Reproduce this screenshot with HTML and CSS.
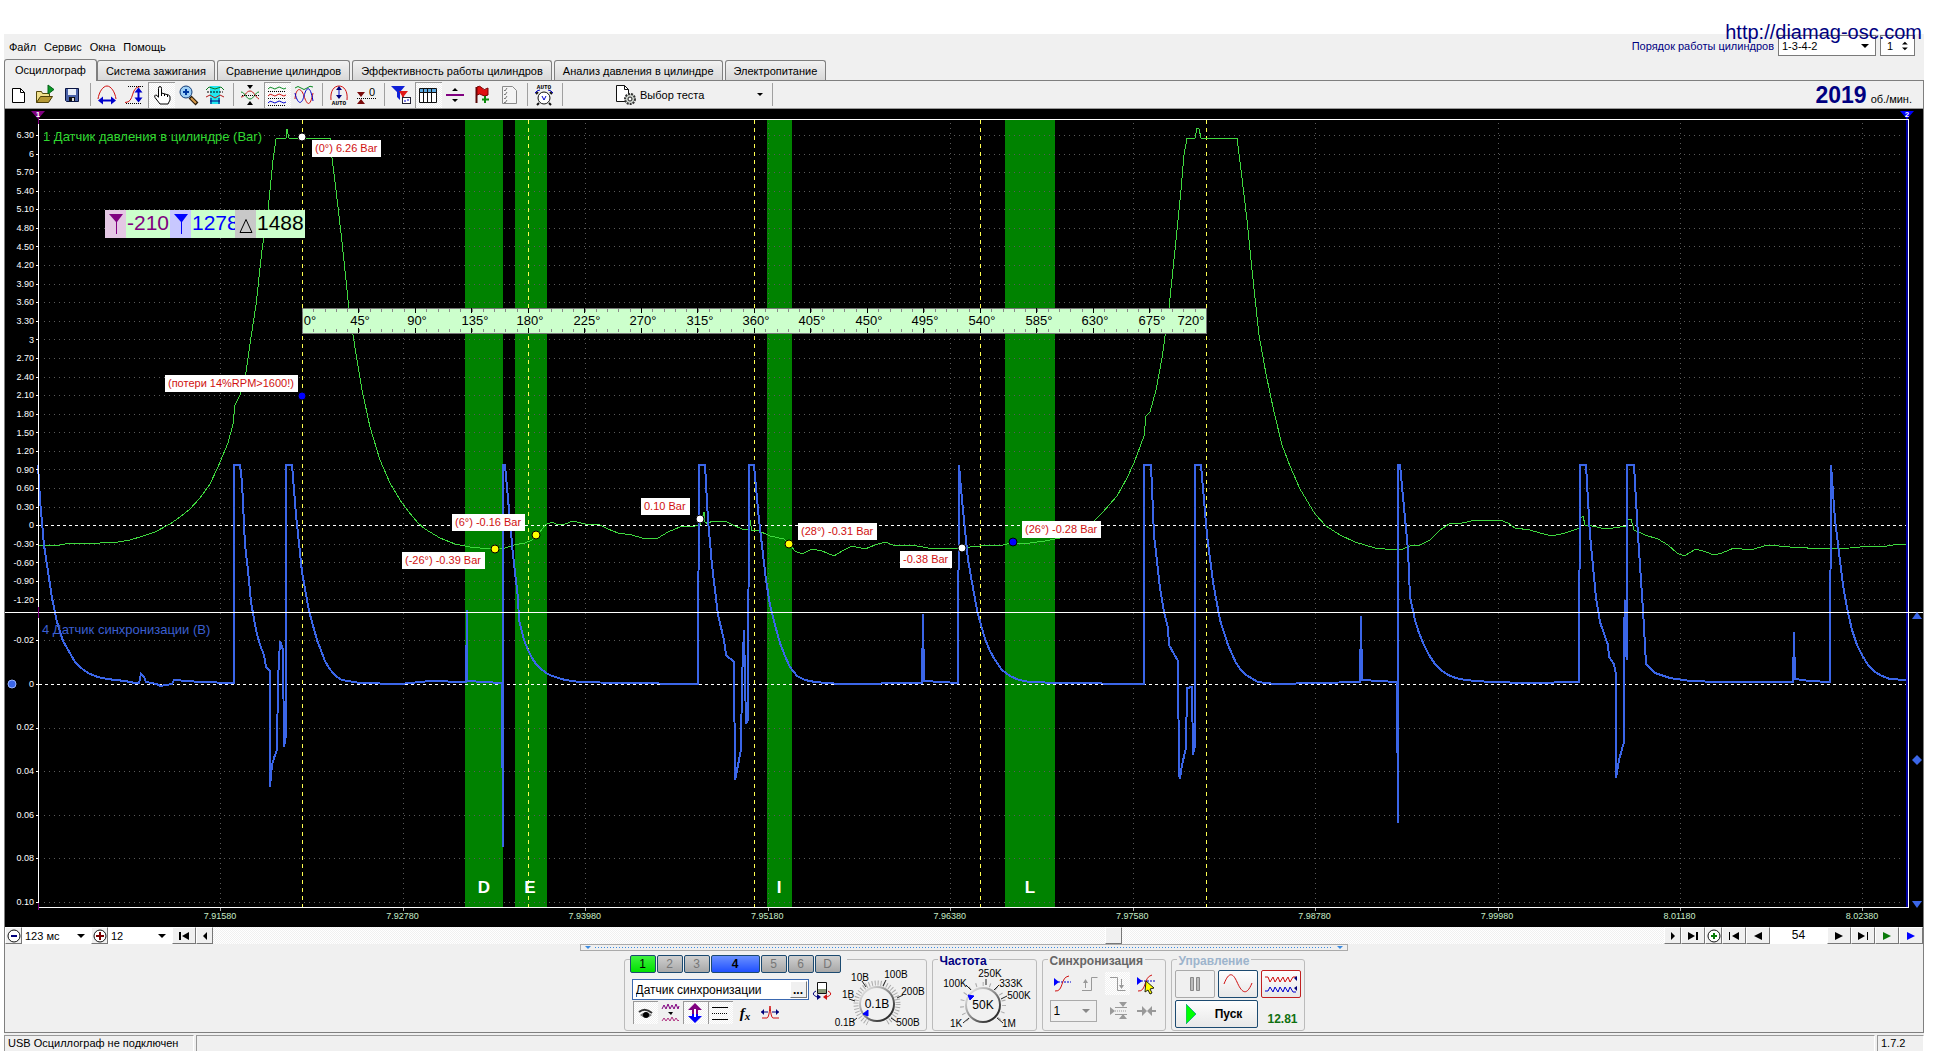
FILE: index.html
```html
<!DOCTYPE html>
<html lang="ru">
<head>
<meta charset="utf-8">
<title>Осциллограф</title>
<link rel="stylesheet" href="styles.css">
</head>
<body>
<div class="app">
  <a class="site-link" href="http://diamag-osc.com">http://diamag-osc.com</a>

  <header class="menubar">
    <nav class="menu">
      <button type="button">Файл</button>
      <button type="button">Сервис</button>
      <button type="button">Окна</button>
      <button type="button">Помощь</button>
    </nav>
    <div class="order">
      <label for="order">Порядок работы цилиндров</label>
      <span class="drop drop-order"><select id="order"><option>1-3-4-2</option></select><i class="arrow"></i></span>
      <span class="spin"><input id="cyl" type="text" value="1" aria-label="Цилиндр"><svg width="8" height="14" viewBox="0 0 8 14"><path d="M0 5l4-4 4 4zM0 9h8l-4 4z"/></svg></span>
    </div>
  </header>

  <nav class="tabs">
    <button type="button" class="tab tab-on">Осциллограф</button>
    <button type="button" class="tab">Система зажигания</button>
    <button type="button" class="tab">Сравнение цилиндров</button>
    <button type="button" class="tab">Эффективность работы цилиндров</button>
    <button type="button" class="tab">Анализ давления в цилиндре</button>
    <button type="button" class="tab">Электропитание</button>
  </nav>

  <main class="page">
    <div class="toolbar">
      <button type="button" class="tool" aria-label="Новый"><svg viewBox="0 0 22 22"><path d="M5.500 4.500h8l4 4v10h-12z" fill="#fff" stroke="#000"/><path d="M13.500 4.500v4h4" fill="none" stroke="#000"/></svg></button>
      <button type="button" class="tool" aria-label="Открыть"><svg viewBox="0 0 22 22"><path d="M2.500 18.500v-11h5l1 2h7v3" fill="#f0e08c" stroke="#55490c"/><path d="M2.500 18.500l4-6h12l-4 6z" fill="#b79a35" stroke="#4b3f08"/><path d="M14 1v9l6-4.500z" fill="#0a9a28" stroke="#056017"/></svg></button>
      <button type="button" class="tool" aria-label="Сохранить"><svg viewBox="0 0 22 22"><path d="M4.500 4.500h13v13h-12l-1-1z" fill="#4a62a8" stroke="#0a1440"/><path d="M7 5h8v6H7z" fill="#e8eef8"/><path d="M8 13h6v4H8z" fill="#111"/><path d="M11 14h2v3h-2z" fill="#ddd"/></svg></button>
      <i class="sep"></i>
      <button type="button" class="tool" aria-label="Время"><svg viewBox="0 0 22 22"><path d="M2 15c1-7 5-13 9-13s8 6 9 13" fill="none" stroke="#d01010"/><path d="M5 16.500h12" stroke="#00c" stroke-width="2"/><path d="M7 12.500v8l-5-4zM15 12.500v8l5-4z" fill="#00c"/></svg></button>
      <button type="button" class="tool" aria-label="Амплитуда"><svg viewBox="0 0 22 22"><path d="M2 18.500c10 0 5-15 15-16" fill="none" stroke="#d01010"/><path d="M5 2.500h15M3 19.500h16" stroke="#000" stroke-dasharray="1 1"/><path d="M15.500 5v12" stroke="#00c" stroke-width="2"/><path d="M11.500 8.500h8l-4-5zM11.500 13.500h8l-4 5z" fill="#00c"/></svg></button>
      <button type="button" class="tool pressed" aria-label="Рука"><svg viewBox="0 0 22 22"><path d="M8.500 13V4.500q0-2 1.500-2t1.500 2V9l7 2q1.500.5 1.500 2v3l-2 4h-8L5 13.500q-1-2 .5-2.500t3 2.500" fill="#fff" stroke="#000"/><path d="M11.500 9v3M14.500 10v2M17.500 11v2" stroke="#000"/></svg></button>
      <button type="button" class="tool" aria-label="Лупа"><svg viewBox="0 0 22 22"><path d="M13 13l7 7" stroke="#2b1c08" stroke-width="4"/><path d="M14 14l5 5" stroke="#d89a4a" stroke-width="2"/><circle cx="9" cy="8" r="6" fill="#9fd0f5" stroke="#123c78" stroke-width="1"/><path d="M9 5v6M6 8h6" stroke="#003aa0" stroke-width="2"/></svg></button>
      <button type="button" class="tool" aria-label="Область"><svg viewBox="0 0 22 22"><path d="M6 2h10v18H6z" fill="#22e6f0"/><path d="M2 6l3-3 6 2 6-2 3 3" fill="none" stroke="#0a7a20" stroke-width="1"/><path d="M3 8h16" stroke="#000" stroke-dasharray="2 1"/><path d="M2 13l4-2 5 3 5-3 4 2" fill="none" stroke="#b01818"/><path d="M6 17h10M7 14v6M15 14v6" stroke="#00007a"/></svg></button>
      <i class="sep"></i>
      <button type="button" class="tool" aria-label="Совместить"><svg viewBox="0 0 22 22"><path d="M2 13c4 0 5-6 9-6s5 6 9 8" fill="none" stroke="#c01818"/><path d="M2 8c4 0 5 7 9 7s5-7 9-7" fill="none" stroke="#0a8a20"/><path d="M3 11.500h17" stroke="#000" stroke-dasharray="1 1"/><path d="M8 1h6l-3 4zM8 21h6l-3-4z"/></svg></button>
      <button type="button" class="tool pressed" aria-label="Разнести"><svg viewBox="0 0 22 22" fill="none"><path d="M2 5q2-3 4.500-1t4.500 0 4.500 0T20 4" stroke="#0a8a20" stroke-width="1"/><path d="M2 7.500h18M2 14.500h18M2 21.500h18" stroke="#000" stroke-dasharray="1 1"/><path d="M2 12q2-3 4.500-1t4.500 0 4.500 0T20 11" stroke="#d01010"/><path d="M2 19q2-3 4.500-1t4.500 0 4.500 0T20 18" stroke="#00c"/></svg></button>
      <button type="button" class="tool" aria-label="Наложить"><svg viewBox="0 0 22 22" fill="none"><path d="M2 4q3-3 6 0t6 0 6-1" stroke="#0a8a20"/><path d="M2 15c1-12 6-12 9-3s6 12 9-3" stroke="#d01010"/><path d="M2 9c3 13 7 11 9 3s6-13 9 5" stroke="#00c"/></svg></button>
      <i class="sep"></i>
      <button type="button" class="tool" aria-label="Авто"><svg viewBox="0 0 22 22"><path d="M3 16C2 7 6 2 11 2s9 5 8 14" fill="none" stroke="#d01010"/><path d="M11 4v10" stroke="#00c"/><path d="M8 6h6l-3-4zM8 11h6l-3 4z" fill="#00007a"/><text x="11" y="21" class="ico-auto">AUTO</text></svg></button>
      <button type="button" class="tool" aria-label="Ноль"><svg viewBox="0 0 22 22"><path d="M2 8h8l-4 5zM2 20h8l-4-5z" fill="#7a0a0a"/><path d="M2 14.500h19" stroke="#000" stroke-dasharray="1 1"/><text x="17" y="12" class="ico-zero">0</text></svg></button>
      <i class="sep"></i>
      <button type="button" class="tool" aria-label="Фильтр"><svg viewBox="0 0 22 22"><path d="M1 2h14l-5 6v8l-3-3V8z" fill="#1020d8"/><path d="M9 7h9l-4 5v6l-2-2v-4z" fill="#e01818"/><rect x="12.500" y="13.500" width="8" height="6" fill="#fff" stroke="#223"/><path d="M14 17h2M17 16h2" stroke="#00c"/></svg></button>
      <button type="button" class="tool pressed" aria-label="Таблица"><svg viewBox="0 0 22 22"><path d="M2.500 4.500h17v14h-17z" fill="#fff" stroke="#111"/><path d="M3 5h16v3H3z" fill="#5aa8e0"/><path d="M2 8.500h18M6.500 5v13M10.500 5v13M14.500 5v13" stroke="#111"/></svg></button>
      <button type="button" class="tool" aria-label="Разделить"><svg viewBox="0 0 22 22"><path d="M2 11h18" stroke="#800080" stroke-width="2"/><path d="M8 7h6l-3-3zM8 15h6l-3 3z"/></svg></button>
      <button type="button" class="tool" aria-label="Метка"><svg viewBox="0 0 22 22"><path d="M5.500 3v16" stroke="#5a0808" stroke-width="2"/><path d="M6 3q3-2 5 1t6 0v7q-4 2-6 0t-5 0z" fill="#e01010" stroke="#700"/><path d="M14 12v7M11 15.500h7" stroke="#0a8a0a" stroke-width="2"/></svg></button>
      <button type="button" class="tool" aria-label="Список"><svg viewBox="0 0 22 22"><path d="M4.500 2.500h10l4 4v13h-14z" fill="#f4f4f4" stroke="#8a8a8a"/><path d="M6 6l1 1 2-3M6 10l1 1 2-3M6 14l1 1 2-3M6 18l1 1 2-3" fill="none" stroke="#777"/></svg></button>
      <i class="sep"></i>
      <button type="button" class="tool" aria-label="Автоизмерение"><svg viewBox="0 0 22 22"><text x="11" y="5" class="ico-auto">AUTO</text><circle cx="11" cy="14" r="6" fill="#fff" stroke="#111" stroke-width="1"/><path d="M5 8L3 10M17 8l2 2M6 19l-2 2M16 19l2 2" stroke="#111" stroke-width="2"/><path d="M2 9q2-3 5-3M20 9q-2-3-5-3" fill="none" stroke="#00c"/><path d="M9 12l2 4 2-4" fill="none" stroke="#00c" stroke-width="1"/></svg></button>
      <i class="sep"></i>
      <button type="button" class="test-pick">
        <svg width="22" height="22" viewBox="0 0 22 22"><path d="M1.500 1.500h8l4 4v12h-12z" fill="#fff" stroke="#111"/><path d="M9.500 1.500v4h4" fill="none" stroke="#111"/><circle cx="15" cy="15" r="5" fill="#cdd3cd" stroke="#333" stroke-width="2" stroke-dasharray="2 1"/><circle cx="15" cy="15" r="2" fill="#fff" stroke="#222"/></svg>
        <span>Выбор теста</span><i class="arrow"></i>
      </button>
      <i class="sep"></i>
      <output class="rpm"><b>2019</b><span>об./мин.</span></output>
    </div>

    <section class="scope">
      <svg class="plot" viewBox="5 109 1918 818" preserveAspectRatio="none">
        <g fill="#008200"><path d="M465 120h38v787h-38zM515 120h32v787h-32zM767 120h25v787h-25zM1005 120h50v787h-50z"/></g>
        <g fill="none" stroke="#5a5a5a" shape-rendering="crispEdges" stroke-dasharray="1 4">
          <path d="M44 135.500H1904M44 154.500H1904M44 172.500H1904M44 191.500H1904M44 209.500H1904M44 228.500H1904M44 246.500H1904M44 265.500H1904M44 284.500H1904M44 302.500H1904M44 321.500H1904M44 339.500H1904M44 358.500H1904M44 377.500H1904M44 395.500H1904M44 414.500H1904M44 432.500H1904M44 451.500H1904M44 469.500H1904M44 488.500H1904M44 507.500H1904M44 544.500H1904M44 562.500H1904M44 581.500H1904M44 599.500H1904M44 640.500H1904M44 728.500H1904M44 771.500H1904M44 815.500H1904M44 858.500H1904M44 902.500H1904"/>
          <path d="M220.500 123V905M403.500 123V905M585.500 123V905M768.500 123V905M950.500 123V905M1133.500 123V905M1315.500 123V905M1498.500 123V905M1680.500 123V905M1862.500 123V905"/>
        </g>
        <g fill="none" shape-rendering="crispEdges">
          <path d="M39 525.500H1906M39 684.500H1906" stroke="#fff" stroke-dasharray="3 3"/>
          <path d="M302.500 120V907M528.500 120V907M754.500 120V907M980.500 120V907M1206.500 120V907" stroke="#ffff50" stroke-dasharray="4 4"/>
          <path d="M1906.500 113V907" stroke="#0000a0" stroke-width="2"/>
          <path class="trace-green" d="M39 545L60 545 65 544 80 543 100 543 118 542 130 540 143 536 155 532 170 524 180 517 190 509 200 498 210 484 218 467 228 443 233 424 235 405 237 401 240 395 246 372 250 344 256 305 262 250 268 210 273 160 276 139 279 138 286 138 287 129 289 138 330 138 332 158 336 190 342 242 349 309 356 354 362 390 370 427 380 460 390 483 400 500 408 511 418 523 425 529 440 538 455 544 470 547 490 549 505 548 514 545 525 543 532 540 540 532 545 525 552 522 558 525 565 524 573 521 585 524 600 525 608 529 618 533 632 535 642 538 650 539 658 538 668 532 680 527 695 526 700 525 702 519 704 512 705 522 708 524 712 521 725 521 733 525 742 529 749 530 750 520 752 531 757 530 770 536 784 539 789 544 795 551 802 554 812 549 822 551 834 556 842 551 852 546 865 549 875 545 885 542 893 545 912 545 928 548 960 548 980 546 990 545 1000 546 1010 543 1030 543 1045 541 1060 538 1075 533 1089 526 1102 513 1117 496 1127 478 1134 463 1144 436 1146 416 1150 412 1156 390 1162 358 1169 308 1176 240 1181 190 1184 155 1187 138 1195 138 1197 128 1199 129 1201 138 1237 138 1241 170 1247 220 1252 270 1259 335 1266 374 1274 412 1282 445 1290 466 1300 489 1315 514 1326 526 1340 535 1355 542 1375 548 1395 550 1403 549 1412 545 1420 545 1430 540 1440 530 1449 524 1462 523 1476 520 1500 520 1508 523 1515 528 1530 530 1540 533 1552 536 1565 533 1580 528 1581 518 1583 516 1585 525 1592 526 1606 529 1627 526 1628 519 1631 519 1634 530 1645 535 1658 539 1668 545 1677 553 1684 556 1696 549 1706 552 1714 555 1722 553 1734 548 1750 550 1768 545 1790 547 1800 547 1815 549 1850 548 1870 546 1887 546 1900 544 1906 545"/>
          <path class="trace-blue" d="M38 465L40 500 44 545 52 598 57 622 63 641 71 655 75 662 80 667 85 671 90 674 98 677 107 679 125 681 135 683 139 683 141 674 144 677 146 682 157 684 160 686 172 684 174 680 200 682 234 683 234 465 240 465 242 482 245 545 248 570 251 602 256 630 260 645 264 655 266 667 270 671 270 787 272 765 275 755 277 750 278 680 280 641 283 650 284 747 286 735 286 465 292 465 296 515 302 572 309 611 317 640 325 661 329 668 333 673 337 677 342 680 360 683 400 684 430 681 466 682 467 610 467 681 502 683 503 847 503 465 505 465 509 510 513 555 518 598 519 620 524 640 528 650 532 658 536 664 540 668 546 673 552 676 565 680 580 682 620 683 698 684 699 465 705 465 708 520 712 565 718 615 724 640 726 655 734 662 735 780 738 765 741 750 742 680 744 630 746 724 748 720 749 465 754 465 759 520 766 580 770 605 775 625 780 643 785 656 790 667 797 676 805 680 815 682 840 684 922 683 923 614 924 681 958 683 959 465 962 500 968 560 977 610 981 625 985 639 990 651 995 660 1002 670 1010 676 1019 680 1030 682 1060 683 1144 684 1144 465 1151 465 1154 535 1160 588 1164 612 1168 628 1169 645 1178 661 1179 775 1180 779 1182 765 1186 748 1187 688 1192 687 1193 755 1195 745 1195 465 1201 465 1207 535 1213 582 1220 620 1228 645 1236 663 1241 670 1246 675 1258 682 1275 684 1360 682 1361 616 1362 680 1397 682 1398 823 1398 465 1400 465 1408 550 1410 597 1415 620 1419 633 1424 645 1429 655 1435 664 1441 670 1448 675 1456 678 1465 680 1490 682 1530 683 1579 682 1580 465 1586 465 1590 535 1596 598 1600 622 1608 645 1609 657 1614 664 1616 675 1616 778 1619 760 1624 742 1624 635 1625 600 1625 648 1627 660 1627 465 1634 465 1638 535 1643 610 1646 664 1655 673 1670 678 1690 681 1720 682 1793 682 1794 632 1795 679 1810 681 1830 682 1831 465 1835 520 1843 585 1847 608 1852 630 1857 645 1862 655 1868 665 1875 672 1882 676 1890 679 1906 680"/>
          <path d="M38.500 119V908M38 119.500H1909M1908.500 119V908M38 907.500H1909M5 612.500H1923" stroke="#fff"/>
          <path d="M36 135.500h3M36 154.500h3M36 172.500h3M36 191.500h3M36 209.500h3M36 228.500h3M36 246.500h3M36 265.500h3M36 284.500h3M36 302.500h3M36 321.500h3M36 339.500h3M36 358.500h3M36 377.500h3M36 395.500h3M36 414.500h3M36 432.500h3M36 451.500h3M36 469.500h3M36 488.500h3M36 507.500h3M36 525.500h3M36 544.500h3M36 562.500h3M36 581.500h3M36 599.500h3M36 640.500h3M36 684.500h3M36 728.500h3M36 771.500h3M36 815.500h3M36 858.500h3M36 902.500h3" stroke="#fff"/>
          <path d="M220.500 908v3M403.500 908v3M585.500 908v3M768.500 908v3M950.500 908v3M1133.500 908v3M1315.500 908v3M1498.500 908v3M1680.500 908v3M1862.500 908v3" stroke="#aaa"/>
          <path d="M38.500 113V124M38.500 607V618M38.500 903V910" stroke="#800080"/>
          <rect x="302" y="308" width="904" height="25" fill="#ccffcc" stroke="#777"/>
          <path d="M302 310.500H1205M302 330.500H1205" stroke="#888" stroke-width="3" stroke-dasharray="1 10.300"/>
          <path d="M358 310.500H1205M358 330.500H1205" stroke="#000" stroke-width="5" stroke-dasharray="1 55.500"/>
        </g>
      </svg>

      <div class="axis axis-y pin" style="--x:5;--y:130;--h:475">
        <span>6.30</span><span>6</span><span>5.70</span><span>5.40</span><span>5.10</span><span>4.80</span><span>4.50</span><span>4.20</span><span>3.90</span><span>3.60</span><span>3.30</span><span>3</span><span>2.70</span><span>2.40</span><span>2.10</span><span>1.80</span><span>1.50</span><span>1.20</span><span>0.90</span><span>0.60</span><span>0.30</span><span>0</span><span>-0.30</span><span>-0.60</span><span>-0.90</span><span>-1.20</span>
      </div>
      <div class="axis axis-y pin" style="--x:5;--y:635;--h:272">
        <span>-0.02</span><span>0</span><span>0.02</span><span>0.04</span><span>0.06</span><span>0.08</span><span>0.10</span>
      </div>
      <div class="axis axis-x pin" style="--x:195;--y:911;--w:1692">
        <span>7.91580</span><span>7.92780</span><span>7.93980</span><span>7.95180</span><span>7.96380</span><span>7.97580</span><span>7.98780</span><span>7.99980</span><span>8.01180</span><span>8.02380</span>
      </div>

      <span class="pin title title-green" style="--x:43;--y:128">1 Датчик давления в цилиндре (Bar)</span>
      <span class="pin title title-blue" style="--x:42;--y:621">4 Датчик синхронизации (В)</span>

      <div class="pin cursors" style="--x:105;--y:210">
        <i class="cur cur-a"><svg width="14" height="20" viewBox="0 0 14 20"><path d="M0 0h14L8 8v12H7V8z" fill="#800080"/></svg></i><span class="val val-a">-210</span>
        <i class="cur cur-b"><svg width="14" height="20" viewBox="0 0 14 20"><path d="M0 0h14L8 8v12H7V8z" fill="#00f"/></svg></i><span class="val val-b">1278</span>
        <i class="cur cur-d"><svg width="14" height="20" viewBox="0 0 14 20"><path d="M7 5.500L13 18.500H1z" fill="none" stroke="#000"/></svg></i><span class="val val-d">1488</span>
      </div>

      <div class="angles">
        <span class="pin mid" style="--x:310;--y:321">0°</span><span class="pin mid" style="--x:360;--y:321">45°</span><span class="pin mid" style="--x:417;--y:321">90°</span><span class="pin mid" style="--x:475;--y:321">135°</span><span class="pin mid" style="--x:530;--y:321">180°</span><span class="pin mid" style="--x:587;--y:321">225°</span><span class="pin mid" style="--x:643;--y:321">270°</span><span class="pin mid" style="--x:700;--y:321">315°</span><span class="pin mid" style="--x:756;--y:321">360°</span><span class="pin mid" style="--x:812;--y:321">405°</span><span class="pin mid" style="--x:869;--y:321">450°</span><span class="pin mid" style="--x:925;--y:321">495°</span><span class="pin mid" style="--x:982;--y:321">540°</span><span class="pin mid" style="--x:1039;--y:321">585°</span><span class="pin mid" style="--x:1095;--y:321">630°</span><span class="pin mid" style="--x:1152;--y:321">675°</span><span class="pin mid" style="--x:1191;--y:321">720°</span>
      </div>

      <b class="pin mid zone" style="--x:484;--y:888">D</b>
      <b class="pin mid zone" style="--x:530;--y:888">E</b>
      <b class="pin mid zone" style="--x:779;--y:888">I</b>
      <b class="pin mid zone" style="--x:1030;--y:888">L</b>

      <span class="pin note" style="--x:312;--y:140">(0°) 6.26 Bar</span>
      <span class="pin note" style="--x:165;--y:375">(потери 14%RPM&gt;1600!)</span>
      <span class="pin note" style="--x:452;--y:514">(6°) -0.16 Bar</span>
      <span class="pin note" style="--x:402;--y:552">(-26°) -0.39 Bar</span>
      <span class="pin note" style="--x:641;--y:498">0.10 Bar</span>
      <span class="pin note" style="--x:798;--y:523">(28°) -0.31 Bar</span>
      <span class="pin note" style="--x:900;--y:551">-0.38 Bar</span>
      <span class="pin note" style="--x:1022;--y:521">(26°) -0.28 Bar</span>

      <i class="pin mid dot dot-white" style="--x:302;--y:137"></i>
      <i class="pin mid dot dot-blue" style="--x:302;--y:396"></i>
      <i class="pin mid dot dot-yellow" style="--x:495;--y:549"></i>
      <i class="pin mid dot dot-yellow" style="--x:536;--y:535"></i>
      <i class="pin mid dot dot-white" style="--x:700;--y:519"></i>
      <i class="pin mid dot dot-yellow" style="--x:789;--y:544"></i>
      <i class="pin mid dot dot-white" style="--x:962;--y:548"></i>
      <i class="pin mid dot dot-blue" style="--x:1013;--y:542"></i>
      <i class="pin mid dot dot-level" style="--x:12;--y:684"></i>

      <span class="pin mid flag flag-1" style="--x:38;--y:115">1</span>
      <span class="pin mid flag flag-2" style="--x:1907;--y:115">2</span>
      <svg class="pin mid" style="--x:1917;--y:616" width="10" height="8" viewBox="0 0 10 8"><path d="M0 7h10L5 0z" fill="#3b66e8"/></svg>
      <svg class="pin mid" style="--x:1917;--y:760" width="10" height="10" viewBox="0 0 10 10"><path d="M5 0l5 5-5 5-5-5z" fill="#3b66e8"/></svg>
      <svg class="pin mid" style="--x:1917;--y:905" width="10" height="8" viewBox="0 0 10 8"><path d="M0 0h10L5 7z" fill="#3b66e8"/></svg>
    </section>

    <div class="timeline">
      <button type="button" class="nav nav-s" aria-label="Меньше"><svg width="14" height="14" viewBox="0 0 14 14"><circle cx="7" cy="7" r="6" fill="#fff" stroke="#111"/><path d="M4 7h6" stroke="#00007a" stroke-width="2"/></svg></button>
      <span class="drop drop-ms"><select aria-label="Развёртка"><option>123 мс</option></select><i class="arrow"></i></span>
      <button type="button" class="nav nav-s" aria-label="Больше"><svg width="14" height="14" viewBox="0 0 14 14"><circle cx="7" cy="7" r="6" fill="#fff" stroke="#111"/><path d="M3 7h8M7 3v8" stroke="#7a0000" stroke-width="2"/></svg></button>
      <span class="drop drop-zoom"><select aria-label="Масштаб"><option>12</option></select><i class="arrow"></i></span>
      <button type="button" class="nav" aria-label="В начало"><svg width="10" height="8" viewBox="0 0 10 8"><path d="M0 0h2v8H0zM10 0v8L3 4z"/></svg></button>
      <button type="button" class="nav nav-s" aria-label="Назад"><svg width="4" height="8" viewBox="0 0 4 8"><path d="M4 0v8L0 4z"/></svg></button>
      <div class="track"><i class="thumb"></i></div>
      <button type="button" class="nav nav-s" aria-label="Вперёд"><svg width="4" height="8" viewBox="0 0 4 8"><path d="M0 0v8l4-4z"/></svg></button>
      <button type="button" class="nav" aria-label="В конец"><svg width="10" height="8" viewBox="0 0 10 8"><path d="M8 0h2v8H8zM0 0v8l7-4z"/></svg></button>
      <button type="button" class="nav nav-s" aria-label="Добавить"><svg width="14" height="14" viewBox="0 0 14 14"><circle cx="7" cy="7" r="6" fill="#fff" stroke="#111"/><path d="M4 7h6M7 4v6" stroke="#0a7a0a" stroke-width="2"/></svg></button>
      <button type="button" class="nav" aria-label="Первый кадр"><svg width="10" height="8" viewBox="0 0 10 8"><path d="M0 0h1v8H0zM10 0v8L3 4z"/></svg></button>
      <button type="button" class="nav" aria-label="Предыдущий кадр"><svg width="8" height="8" viewBox="0 0 8 8"><path d="M8 0v8L0 4z"/></svg></button>
      <output class="frame">54</output>
      <button type="button" class="nav" aria-label="Следующий кадр"><svg width="8" height="8" viewBox="0 0 8 8"><path d="M0 0v8l8-4z"/></svg></button>
      <button type="button" class="nav" aria-label="Последний кадр"><svg width="10" height="8" viewBox="0 0 10 8"><path d="M9 0h1v8H9zM0 0v8l7-4z"/></svg></button>
      <button type="button" class="nav" aria-label="Воспроизвести"><svg width="8" height="8" viewBox="0 0 8 8"><path d="M0 0v8l8-4z" fill="#0a7a0a"/></svg></button>
      <button type="button" class="nav" aria-label="Повтор"><svg width="8" height="8" viewBox="0 0 8 8"><path d="M0 0v8l8-4z" fill="#00f"/></svg></button>
    </div>

    <div class="grip"><i class="grip-tri"></i><i class="grip-dots"></i><i class="grip-tri"></i></div>

    <section class="controls">
      <div class="group group-channel">
        <div class="channels">
          <button type="button" class="ch ch-1">1</button><button type="button" class="ch">2</button><button type="button" class="ch">3</button><button type="button" class="ch ch-4">4</button><button type="button" class="ch">5</button><button type="button" class="ch">6</button><button type="button" class="ch">D</button>
        </div>
        <div class="channel-body">
          <div class="channel-left">
            <div class="sensor-row">
              <span class="sensor"><input type="text" value="Датчик синхронизации" aria-label="Датчик"><button type="button">...</button></span>
              <svg width="20" height="20" viewBox="0 0 20 20"><path d="M5.500 2.500h9v11h-9z" fill="#fff" stroke="#111"/><path d="M6 9h8v4H6z" fill="#8a9a7a"/><path d="M4 11q-6 3 1 6" fill="none" stroke="#00007a"/><path d="M5 14l4 3-4 3z" fill="#00007a"/><path d="M16 11q6 3-1 6" fill="none" stroke="#d01010"/><path d="M15 14l-4 3 4 3z" fill="#d01010"/></svg>
            </div>
            <div class="mini-row">
              <button type="button" class="mini pressed" aria-label="Видимость"><svg viewBox="0 0 22 22"><path d="M5 10q6-5 13 1" fill="none" stroke="#333" stroke-width="2"/><path d="M6 13q5-5 12 0-6 5-12 0z" fill="#777"/><circle cx="12" cy="13" r="3" fill="#000"/></svg></button>
              <button type="button" class="mini" aria-label="Сглаживание"><svg viewBox="0 0 22 22" fill="none"><path d="M3 7l2-4 2 4 2-5 2 5 2-4 2 4 2-5 2 5 1-3" stroke="#800080"/><path d="M9 10h5l-2 3z" fill="#000"/><path d="M3 19l2-3 2 3 2-3 2 3 2-4 2 4 2-3 2 3 1-1" stroke="#b03080"/></svg></button>
              <button type="button" class="mini pressed" aria-label="Инверсия"><svg viewBox="0 0 22 22"><path d="M11 1l7 7h-4v4H8V8H4z" fill="#800080"/><path d="M11 21l-7-7h4v-2h6v2h4z" fill="#00f"/><path d="M11 7v8" stroke="#fff" stroke-width="2"/></svg></button>
              <button type="button" class="mini pressed" aria-label="Уровни"><svg viewBox="0 0 22 22"><path d="M3 5.500h16M3 17.500h16" stroke="#000"/><path d="M3 11.500h16" stroke="#000" stroke-dasharray="1 1"/></svg></button>
              <button type="button" class="mini mini-fx" aria-label="Функция"><i>f<sub>x</sub></i></button>
              <button type="button" class="mini" aria-label="Сдвиг"><svg viewBox="0 0 22 22"><path d="M3 16h5q2 0 3-12 1 12 3 12h6" fill="none" stroke="#d01010"/><path d="M2 10h7M13 10h7" stroke="#00007a"/><path d="M5 7v6l-3-3zM17 7v6l3-3z" fill="#00007a"/></svg></button>
            </div>
          </div>
          <svg class="knob" width="92" height="64" viewBox="834 966 92 64">
            <circle cx="877" cy="1004" r="21" fill="none" stroke="#aaa" stroke-width="5" stroke-dasharray="1 2"/>
            <path d="M857 1018l-5 4M855 1001l-6-2M866 987l-4-6M883 986l3-6M897 998l6-3M891 1018l6 4" stroke="#222"/>
            <path d="M864 1031l13-27 13 27z" fill="#f0f0f0"/>
            <circle cx="877" cy="1004" r="18" fill="url(#rim)"/><circle cx="877" cy="1004" r="16" fill="#f1f1f1"/>
            <path d="M863 1014l5-4v6z" fill="#00f" stroke="#00f"/>
            <text x="877" y="1008" class="knob-val">0.1В</text>
            <g class="knob-lab"><text x="845" y="1026">0.1В</text><text x="848" y="998">1В</text><text x="860" y="981">10В</text><text x="896" y="978">100В</text><text x="913" y="995">200В</text><text x="908" y="1026">500В</text></g>
            <defs><linearGradient id="rim" x1="0" y1="0" x2="1" y2="1"><stop offset="0" stop-color="#fff"/><stop offset="0.500" stop-color="#888"/><stop offset="1" stop-color="#000"/></linearGradient></defs>
          </svg>
        </div>
      </div>

      <div class="group group-freq">
        <h2 class="cap cap-navy">Частота</h2>
        <svg class="knob" width="100" height="64" viewBox="932 966 100 64">
          <circle cx="982" cy="1004" r="21" fill="none" stroke="#aaa" stroke-width="4" stroke-dasharray="1 6"/>
          <path d="M969 1019l13-15 13 15v9h-26z" fill="#f0f0f0"/>
          <path d="M968 1017l-6 5M970 989l-5-5M985 984v-6M993 989l5-5M1000 998l6-3M996 1017l6 5" stroke="#222"/>
          <circle cx="982" cy="1004" r="18" fill="url(#rim)"/><circle cx="982" cy="1004" r="16" fill="#f1f1f1"/>
          <path d="M967 994l6 1-4 4z" fill="#00f" stroke="#00f"/>
          <text x="982" y="1008" class="knob-val">50K</text>
          <g class="knob-lab"><text x="989" y="976">250K</text><text x="954" y="986">100K</text><text x="1010" y="986">333K</text><text x="1018" y="998">500K</text><text x="955" y="1026">1K</text><text x="1008" y="1026">1M</text></g>
        </svg>
      </div>

      <div class="group group-sync">
        <h2 class="cap cap-gray">Синхронизация</h2>
        <div class="sync-grid">
          <button type="button" class="mini" aria-label="Уровень"><svg viewBox="0 0 22 22"><path d="M4 9h16" stroke="#00c" stroke-dasharray="2 1"/><path d="M3 5v8l5-4z" fill="#00f"/><path d="M4 18c9 1 5-14 14-15" fill="none" stroke="#d01010"/></svg></button>
          <button type="button" class="mini" aria-label="Фронт"><svg viewBox="0 0 22 22"><path d="M3 17.500h9.500v-13h6M6.500 8v7" fill="none" stroke="#999"/><path d="M4 10h5l-2.500-4z" fill="#999"/></svg></button>
          <button type="button" class="mini dither" aria-label="Спад"><svg viewBox="0 0 22 22"><path d="M3 4.500h7.500v13h8M14.500 6v8" fill="none" stroke="#999"/><path d="M12 12h5l-2.500 4z" fill="#999"/></svg></button>
          <button type="button" class="mini" aria-label="Выбор уровня"><svg viewBox="0 0 22 22"><path d="M3 8h17" stroke="#00c" stroke-dasharray="2 1"/><path d="M2 4v8l5-4z" fill="#00f"/><path d="M3 18c9 1 5-14 14-16" fill="none" stroke="#d01010"/><path d="M11 8l8 7-4 1 2 4-2 1-2-4-3 2z" fill="#ff0" stroke="#221"/></svg></button>
          <span class="drop drop-sync"><select aria-label="Канал синхронизации"><option>1</option></select><i class="arrow"></i></span>
          <button type="button" class="mini" aria-label="Гистерезис"><svg viewBox="0 0 22 22"><path d="M3 7v8l5-4zM12 2h8l-4 5zM12 19h8l-4-5z" fill="#999"/><path d="M8 7.500h12M8 14.500h12" stroke="#999"/><path d="M8 11h12" stroke="#999" stroke-dasharray="1 1"/></svg></button>
          <button type="button" class="mini" aria-label="Центр"><svg viewBox="0 0 22 22"><path d="M2 10h5V6l5 5-5 5v-4H2zM21 10h-4V6l-5 5 5 5v-4h4z" fill="#999"/></svg></button>
        </div>
      </div>

      <div class="group group-run">
        <h2 class="cap cap-blue">Управление</h2>
        <div class="run-grid">
          <button type="button" class="big big-off" aria-label="Пауза"><svg width="12" height="16" viewBox="0 0 12 16"><path d="M1.500 1.500h3v13h-3zM7.500 1.500h3v13h-3z" fill="#bbb" stroke="#888"/></svg></button>
          <button type="button" class="big" aria-label="Одиночный"><svg width="30" height="20" viewBox="0 0 30 20"><path d="M1 10C6-3 10-1 14 8s9 16 15 1" fill="none" stroke="#d01010"/></svg></button>
          <button type="button" class="big big-red" aria-label="Непрерывный"><svg width="34" height="20" viewBox="0 0 34 20" fill="none"><path d="M1 3h3l2 5 3-5 2 5 3-5 2 5 3-5 2 5 3-5 2 5 3-5h3" stroke="#d01010"/><path d="M1 17h3l2-4 3 5 2-5 3 5 2-5 3 5 2-5 3 5 2-5 3 5h3" stroke="#00c"/><path d="M33 2v5l-3-3zM33 12v5l-3-3z" fill="#007"/></svg></button>
          <button type="button" class="big big-start"><svg width="10" height="20" viewBox="0 0 10 20"><path d="M0 0v20l10-10z" fill="#0f0" stroke="#2a8"/></svg><span>Пуск</span></button>
          <output class="volt">12.81</output>
        </div>
      </div>
    </section>
  </main>

  <footer class="status">
    <span class="status-usb">USB Осциллограф не подключен</span>
    <span class="status-mid"></span>
    <span class="status-ver">1.7.2</span>
  </footer>
</div>
</body>
</html>
```
FILE: styles.css
```css
* { box-sizing: border-box; }
html, body { height: 100%; }
body {
  margin: 0;
  padding: 34px 12px 5px 4px;
  background: #fff;
  color: #000;
  font: 11px/16px "Liberation Sans", Arial, sans-serif;
}
button, input, select { font: inherit; color: inherit; margin: 0; padding: 0; border: 0; background: none; border-radius: 0; }
button { display: flex; align-items: center; justify-content: center; }
select { appearance: none; width: 100%; padding-left: 3px; }
svg { display: block; }
h2 { margin: 0; }

.app { position: relative; display: flex; flex-direction: column; height: 100%; background: #f0f0f0; }
.site-link {
  position: absolute; top: -14px; right: 2px; z-index: 2;
  font-size: 20px; line-height: 24px; color: #000080; text-decoration: none;
}

/* menu */
.menubar { display: flex; justify-content: space-between; height: 24px; }
.menu { display: flex; gap: 8px; align-items: center; padding: 2px 0 0 5px; }
.order { display: flex; gap: 4px; align-items: flex-start; padding: 1px 9px 0 0; }
.order label { margin-top: 3px; color: #000080; }
.drop, .spin { position: relative; display: flex; align-items: center; background: #fff; }
.arrow {
  width: 0; height: 0; flex: none;
  border: 4px solid transparent; border-top-color: #000; border-bottom: 0;
}
.drop .arrow { position: absolute; right: 6px; pointer-events: none; }
.drop-order { width: 98px; height: 21px; border: 1px solid #7a7a7a; }
.spin { width: 35px; height: 21px; border: 1px solid #7a7a7a; padding-right: 6px; }
.spin input { width: 100%; padding-left: 6px; }

/* tabs */
.tabs { display: flex; align-items: flex-end; gap: 2px; height: 22px; }
.tab {
  height: 20px; padding: 0 8px;
  border: 1px solid #7f7f7f; border-bottom: 0; border-radius: 3px 3px 0 0;
  background: linear-gradient(#f2f2f2, #d8d8d8);
}
.tab-on { height: 22px; padding: 0 10px; background: #f0f0f0; margin: 0 -2px -1px 0; padding-bottom: 1px; z-index: 1; }

/* working page */
.page { flex: 1; display: flex; flex-direction: column; min-height: 0; border: 1px solid #7f7f7f; }
.toolbar { display: flex; align-items: center; height: 28px; flex: none; border-bottom: 1px solid #999; }
.tool { width: 27px; height: 26px; padding-right: 2px; }
.tool svg { width: 22px; height: 22px; }
.dither, .pressed { background: repeating-conic-gradient(#fff 0 25%, #f0f0f0 0 50%) 0 0 / 2px 2px; }
.pressed { box-shadow: inset 1px 1px #999; }
.sep { width: 1px; height: 23px; margin: 0 3px 0 4px; background: #a0a0a0; flex: none; }
.ico-auto { font: 700 6px "Liberation Mono", monospace; text-anchor: middle; }
.ico-zero { font: 11px "Liberation Sans", sans-serif; text-anchor: middle; }
.test-pick { width: 202px; padding: 0 5px 0 49px; gap: 3px; }
.test-pick .arrow { margin-left: auto; border-width: 3px; border-bottom: 0; }
.rpm { margin-left: auto; display: flex; align-items: baseline; gap: 4px; padding-right: 11px; }
.rpm b { font-size: 23px; line-height: 26px; color: #000080; }

/* oscilloscope screen; pins take --x / --y in screen units */
.scope { position: relative; flex: 1; min-height: 0; background: #000; overflow: hidden; }
.plot { position: absolute; inset: 0; width: 100%; height: 100%; }
.trace-green { stroke: #3fd83f; }
.trace-blue { stroke: #3b66e8; stroke-width: 2; }
.pin {
  position: absolute; white-space: nowrap;
  left: calc((var(--x) - 5) / 1918 * 100%);
  top: calc((var(--y) - 109) / 818 * 100%);
}
.mid { transform: translate(-50%, -50%); }
.axis { display: flex; justify-content: space-between; font-size: 9px; line-height: 10px; color: #fff; }
.axis-y { flex-direction: column; width: 29px; text-align: right; height: calc(var(--h) / 818 * 100%); }
.axis-x { width: calc(var(--w) / 1918 * 100%); color: #c8ecc8; }
.axis-x span { width: 50px; text-align: center; }
.title { font-size: 13px; line-height: 18px; }
.title-green { color: #30d830; }
.title-blue { color: #3b5fd0; }
.angles { font-size: 13px; line-height: 14px; }
.zone { font-size: 17px; line-height: 18px; color: #fff; }
.note { padding: 0 4px 0 3px; line-height: 17px; color: #d01010; background: #fff; }
.dot { width: 9px; height: 9px; border: 1px solid #000; border-radius: 50%; }
.dot-white { background: #fff; }
.dot-blue { background: #00f; }
.dot-yellow { background: #ff0; }
.dot-level { background: #3b66e8; border-color: #9ab4ff; }
.flag { width: 14px; height: 8px; font: 700 8px/8px "Liberation Sans", sans-serif; text-align: center; color: #fff; clip-path: polygon(0 0, 100% 0, 50% 100%); }
.flag-1 { background: #800080; }
.flag-2 { background: #00f; }
.cursors { display: flex; height: 28px; font-size: 21px; line-height: 26px; }
.cur { display: flex; align-items: center; justify-content: center; width: 21px; }
.cur-a { background: #e4c8e4; }
.cur-b { background: #c8c8ff; }
.cur-d { background: #c8c8c8; }
.val { width: 44px; padding-left: 1px; overflow: hidden; background: #ccffcc; }
.val-a { color: #800080; }
.val-b { color: #00f; }
.val-d { width: 49px; }

/* time line */
.timeline { display: flex; align-items: stretch; flex: none; height: 17px; background: #fff; }
.nav { width: 24px; flex: none; background: #f0f0f0; border: 1px solid; border-color: #fff #777 #777 #fff; }
.nav-s { width: 17px; }
.drop-ms { width: 69px; }
.drop-zoom { width: 64px; }
.track { position: relative; flex: 1; background: repeating-conic-gradient(#fff 0 25%, #f0f0f0 0 50%) 0 0 / 2px 2px; }
.thumb { position: absolute; left: 61.5%; top: 0; width: 17px; height: 17px; background: #f0f0f0; border: 1px solid; border-color: #fff #777 #777 #fff; }
.frame { width: 57px; text-align: center; font-size: 12px; line-height: 17px; }
.grip { display: flex; align-items: center; gap: 4px; flex: none; align-self: center; width: 40%; height: 7px; padding: 0 4px; border: 1px solid #aaa; }
.grip-tri { border: 3px solid transparent; border-top-color: #3a8ae0; border-bottom: 0; }
.grip-dots { flex: 1; height: 1px; background: repeating-linear-gradient(90deg, #3a8ae0 0 1px, transparent 1px 3px); }

/* control groups */
.controls { display: flex; justify-content: center; gap: 5px; flex: none; padding: 8px 0 1px; font-size: 12px; }
.group { height: 72px; border: 1px solid #bbb; border-radius: 3px; }
.cap { width: max-content; margin: -7px 0 0 5px; padding: 0 2px; background: #f0f0f0; font-size: 12px; line-height: 16px; }
.cap-navy { color: #000080; }
.cap-gray { color: #666; }
.cap-blue { color: #9db4cc; }
.group-channel { width: 303px; }
.channels { display: flex; gap: 1px; width: max-content; margin: -5px 0 0 5px; padding-right: 6px; background: #f0f0f0; }
.ch { width: 26px; height: 18px; border: 1px solid #1c4a70; border-radius: 2px; background: linear-gradient(#d0d0d0, #a8a8a8); color: #777; }
.ch-1 { background: linear-gradient(#40f040, #00e000); color: #000; }
.ch-4 { width: 49px; background: linear-gradient(#6a90ff, #2050ff); color: #000; font-weight: 700; }
.channel-body { display: flex; justify-content: space-between; }
.channel-left { padding: 6px 0 0 7px; }
.sensor-row, .mini-row { display: flex; align-items: center; }
.sensor-row { gap: 3px; }
.sensor { display: flex; width: 177px; height: 21px; padding: 1px; border: 1px solid #3a68b0; background: #fff; }
.sensor input { flex: 1; min-width: 0; padding-left: 2px; }
.sensor button { width: 17px; background: #f0f0f0; border: 1px solid; border-color: #fff #777 #777 #fff; font-weight: 700; }
.mini { width: 25px; height: 23px; }
.mini svg { width: 22px; height: 22px; }
.mini-row { padding: 1px 0 0 1px; }
.mini-fx { font: 700 15px/16px "Liberation Serif", serif; }
.mini-fx sub { font-size: 11px; line-height: 8px; vertical-align: -2px; }
.knob { flex: none; margin-top: -7px; }
.group-freq .knob { margin-top: -2px; }
.knob-val { font: 12px "Liberation Sans", sans-serif; text-anchor: middle; }
.knob-lab { font: 10px "Liberation Sans", sans-serif; text-anchor: middle; }
.group-freq { width: 105px; }
.group-sync { width: 124px; }
.sync-grid { display: grid; grid-template-columns: repeat(4, 28px); gap: 4px 0; justify-items: center; align-items: center; padding: 3px 0 0 5px; }
.drop-sync { grid-column: span 2; justify-self: start; width: 47px; height: 22px; margin-left: 2px; border: 1px solid #aaa; background: #f0f0f0; }
.drop-sync .arrow { border-top-color: #888; }
.group-run { width: 134px; }
.run-grid { display: grid; grid-template-columns: repeat(3, 40px); gap: 2px 3px; padding: 1px 0 0 3px; }
.big { height: 28px; border: 1px solid #1c4a70; border-radius: 2px; background: linear-gradient(#fdfdfd, #e8e8e8); }
.big-off { border-color: #aaa; background: #f0f0f0; }
.big-red { border-color: #c02020; }
.big-start { grid-column: span 2; gap: 19px; padding-right: 4px; font-weight: 700; }
.volt { align-self: center; padding: 10px 0 0 7px; font-weight: 700; color: #107010; }

/* status bar */
.status { display: flex; gap: 2px; flex: none; height: 18px; padding-top: 2px; line-height: 14px; }
.status span { height: 16px; border: 1px solid #999; border-right-color: #fff; border-bottom: 0; padding-left: 3px; }
.status-usb { width: 190px; }
.status-mid { flex: 1; }
.status-ver { width: 47px; }
```
